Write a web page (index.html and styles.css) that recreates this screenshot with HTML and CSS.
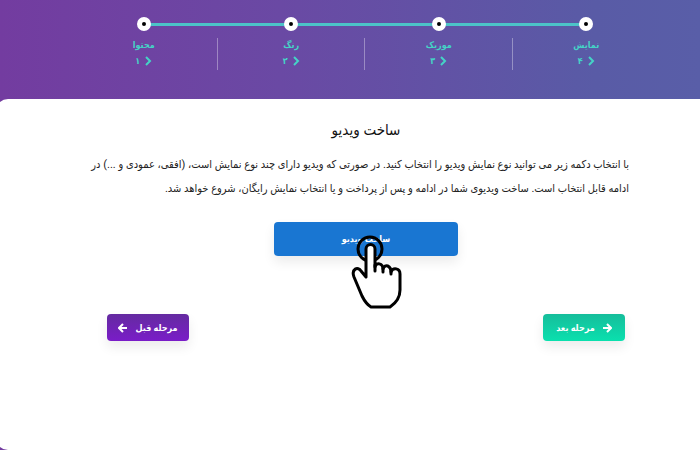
FILE: index.html
```html
<!DOCTYPE html>
<html lang="fa" dir="rtl">
<head>
    <meta charset="UTF-8">
    <meta name="viewport" content="width=device-width, initial-scale=1.0">
    <title>ساخت ویدیو</title>
    <link rel="stylesheet" href="styles.css">
</head>
<body>

<header class="header">
    <ol class="steps">
        <li class="step">
            <span class="dot"></span>
            <span class="label">محتوا</span>
            <span class="number">۱ <svg class="chevron" viewBox="0 0 8 10"><path d="M2 1l4 4-4 4"/></svg></span>
        </li>
        <li class="step">
            <span class="dot"></span>
            <span class="label">رنگ</span>
            <span class="number">۲ <svg class="chevron" viewBox="0 0 8 10"><path d="M2 1l4 4-4 4"/></svg></span>
        </li>
        <li class="step">
            <span class="dot"></span>
            <span class="label">موزیک</span>
            <span class="number">۳ <svg class="chevron" viewBox="0 0 8 10"><path d="M2 1l4 4-4 4"/></svg></span>
        </li>
        <li class="step">
            <span class="dot"></span>
            <span class="label">نمایش</span>
            <span class="number">۴ <svg class="chevron" viewBox="0 0 8 10"><path d="M2 1l4 4-4 4"/></svg></span>
        </li>
    </ol>
</header>

<main class="card">
    <h1>ساخت ویدیو</h1>
    <p class="description">با انتخاب دکمه زیر می توانید نوع نمایش ویدیو را انتخاب کنید. در صورتی که ویدیو دارای چند نوع نمایش است، (افقی، عمودی و ...) در<br>ادامه قابل انتخاب است. ساخت ویدیوی شما در ادامه و پس از پرداخت و یا انتخاب نمایش رایگان، شروع خواهد شد.</p>

    <div class="build">
        <button type="button" class="build-btn">ساخت ویدیو</button>
        <!-- Tap pointer over the button -->
        <svg class="pointer" viewBox="0 0 52 76">
            <circle cx="19" cy="15" r="12"/>
            <path class="hand" d="M15 43V15a4 4 0 0 1 9 0V33C25 28 32 29 32 35C34 29 40 32 40 38C42 33 49 34 49 40V56C49 64 45 69 39 73H20C15 70 13 66 11 62L3 43C0 35 7 32 10 37Z"/>
            <path d="M24 31v6M32 34v4M40 37v3"/>
        </svg>
    </div>

    <div class="actions">
        <button type="button" class="nav-btn next-btn">
            <svg viewBox="0 0 10 10"><path d="M1 5h8M5 1l4 4-4 4"/></svg>
            مرحله بعد
        </button>
        <button type="button" class="nav-btn prev-btn">
            مرحله قبل
            <svg viewBox="0 0 10 10"><path d="M9 5H1M5 1L1 5l4 4"/></svg>
        </button>
    </div>
</main>

</body>
</html>
```
FILE: styles.css
```css
* {
    box-sizing: border-box;
}

body {
    font-family: Roboto, "DejaVu Sans Condensed", "DejaVu Sans", sans-serif;
    background: linear-gradient(90deg, #733ca0 0%, #6a49a4 40%, #595ba6 85%, #595ea8 100%);
    margin: 0;
    min-height: 100vh;
    display: flex;
    flex-direction: column;
    overflow-x: hidden;
}

.header {
    padding: 17px 40px 30px 70px;
}

.steps {
    direction: ltr;
    display: flex;
    list-style: none;
    margin: 0;
    padding: 0;
}

.step {
    flex: 1;
    position: relative;
    display: flex;
    flex-direction: column;
    align-items: center;
    color: #45d3c6;
    font-size: 9px;
    font-weight: bold;
    line-height: 16px;
}

/* Line between this dot and the next one */
.step:not(:last-child)::before {
    content: "";
    position: absolute;
    top: 6px;
    left: 50%;
    width: 100%;
    height: 3px;
    background-color: #4cc3c8;
}

/* Divider between two steps */
.step:not(:last-child)::after {
    content: "";
    position: absolute;
    top: 21px;
    right: 0;
    width: 1px;
    height: 32px;
    background-color: rgba(255, 255, 255, 0.35);
}

.dot {
    position: relative;
    z-index: 1;
    width: 14px;
    height: 14px;
    margin-bottom: 6px;
    border: 5px solid white;
    border-radius: 50%;
    background-color: black;
}

.number {
    display: flex;
    align-items: center;
    gap: 4px;
}

.chevron {
    width: 8px;
    height: 10px;
    fill: none;
    stroke: currentColor;
    stroke-width: 2;
}

.card {
    flex: 1;
    margin-left: -4px;
    padding: 20px 71px 20px 107px;
    background-color: white;
    border-radius: 12px 0 0 12px;
}

.card h1 {
    margin: 0;
    font-size: 15px;
    font-weight: normal;
    line-height: 22px;
    text-align: center;
    color: #111;
}

.description {
    margin: 12px 0 21px;
    font-size: 11px;
    line-height: 24px;
    white-space: nowrap;
    color: #222;
}

.build {
    position: relative;
    width: 184px;
    margin: 0 auto;
}

.build-btn {
    display: block;
    width: 100%;
    height: 34px;
    border: none;
    border-radius: 4px;
    background-color: #1976d2;
    box-shadow: 0 6px 12px rgba(0, 0, 0, 0.08);
    color: white;
    font-family: inherit;
    font-size: 9px;
    font-weight: bold;
    cursor: pointer;
}

.pointer {
    position: absolute;
    top: 12px;
    left: 77px;
    width: 52px;
    height: 76px;
    fill: none;
    stroke: black;
    stroke-width: 3;
    stroke-linecap: round;
    stroke-linejoin: round;
    pointer-events: none;
}

.pointer .hand {
    fill: white;
}

.actions {
    display: flex;
    justify-content: space-between;
    margin-top: 58px;
    padding: 0 4px;
}

.nav-btn {
    display: flex;
    align-items: center;
    justify-content: center;
    gap: 7px;
    width: 82px;
    height: 27px;
    padding: 0;
    border: none;
    border-radius: 4px;
    box-shadow: 0 6px 12px rgba(0, 0, 0, 0.08);
    color: white;
    font-family: inherit;
    font-size: 9px;
    font-weight: bold;
    white-space: nowrap;
    cursor: pointer;
}

.nav-btn svg {
    width: 10px;
    height: 10px;
    fill: none;
    stroke: currentColor;
    stroke-width: 2;
}

.next-btn {
    background: linear-gradient(#16bd9b, #0ae0ae);
}

.prev-btn {
    background: linear-gradient(#642ba0, #7a1cc8);
}
```
